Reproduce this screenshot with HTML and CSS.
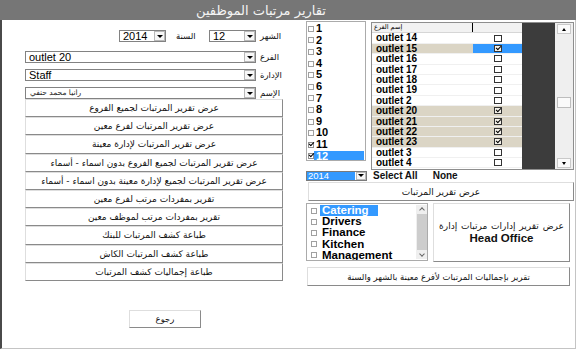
FILE: index.html
```html
<!DOCTYPE html>
<html lang="ar">
<head>
<meta charset="utf-8">
<link rel="stylesheet" href="styles.css">
</head>
<body>
<div class="titlebar"><span class="ar">تقارير مرتبات الموظفين</span></div>
<div class="window">
  <div class="left">
    <div class="frow date">
      <div class="sel sm first"><span class="v">2014</span><span class="dd"></span></div>
      <span class="lbl year ar">السنة</span>
      <div class="sel sm"><span class="v">12</span><span class="dd"></span></div>
      <span class="lbl ar">الشهر</span>
    </div>
    <div class="frow">
      <div class="sel wide"><span class="v">outlet 20</span><span class="dd"></span></div>
      <span class="lbl ar">الفرع</span>
    </div>
    <div class="frow">
      <div class="sel wide"><span class="v">Staff</span><span class="dd"></span></div>
      <span class="lbl ar">الإدارة</span>
    </div>
    <div class="frow">
      <div class="sel wide"><span class="v ar small">رانيا محمد حنفي</span><span class="dd"></span></div>
      <span class="lbl ar">الإسم</span>
    </div>
    <div class="bstack">
      <div class="btn ar">عرض تقرير المرتبات لجميع الفروع</div>
      <div class="btn ar">عرض تقرير المرتبات لفرع معين</div>
      <div class="btn ar">عرض تقرير المرتبات لإدارة معينة</div>
      <div class="btn ar">عرض تقرير المرتبات لجميع الفروع بدون اسماء - أسماء</div>
      <div class="btn ar">عرض تقرير المرتبات لجميع لإدارة معينة بدون اسماء - أسماء</div>
      <div class="btn ar">تقرير بمفردات مرتب لفرع معين</div>
      <div class="btn ar">تقرير بمفردات مرتب لموظف معين</div>
      <div class="btn ar">طباعة كشف المرتبات للبنك</div>
      <div class="btn ar">طباعة كشف المرتبات الكاش</div>
      <div class="btn ar">طباعة إجماليات كشف المرتبات</div>
    </div>
    <div class="btn back ar">رجوع</div>
  </div>

  <div class="right">
    <div class="toprow">
      <div class="months">
        <div class="mi"><span class="cb"></span><span class="t">1</span></div>
        <div class="mi"><span class="cb"></span><span class="t">2</span></div>
        <div class="mi"><span class="cb"></span><span class="t">3</span></div>
        <div class="mi"><span class="cb"></span><span class="t">4</span></div>
        <div class="mi"><span class="cb"></span><span class="t">5</span></div>
        <div class="mi"><span class="cb"></span><span class="t">6</span></div>
        <div class="mi"><span class="cb"></span><span class="t">7</span></div>
        <div class="mi"><span class="cb"></span><span class="t">8</span></div>
        <div class="mi"><span class="cb"></span><span class="t">9</span></div>
        <div class="mi"><span class="cb"></span><span class="t">10</span></div>
        <div class="mi"><span class="cb on"></span><span class="t">11</span></div>
        <div class="mi hl"><span class="cb on"></span><span class="t">12</span></div>
      </div>
      <div class="grid">
        <div class="gmain">
          <div class="gh"><span class="ghn ar">إسم الفرع</span><span class="ghc"></span></div>
          <div class="gr"><span class="gn">outlet 14</span><span class="gc"><i class="box"></i></span></div>
          <div class="gr b"><span class="gn">outlet 15</span><span class="gc cur"><i class="box on"></i></span></div>
          <div class="gr"><span class="gn">outlet 16</span><span class="gc"><i class="box"></i></span></div>
          <div class="gr"><span class="gn">outlet 17</span><span class="gc"><i class="box"></i></span></div>
          <div class="gr"><span class="gn">outlet 18</span><span class="gc"><i class="box"></i></span></div>
          <div class="gr"><span class="gn">outlet 19</span><span class="gc"><i class="box"></i></span></div>
          <div class="gr"><span class="gn">outlet 2</span><span class="gc"><i class="box"></i></span></div>
          <div class="gr b"><span class="gn">outlet 20</span><span class="gc"><i class="box on"></i></span></div>
          <div class="gr b"><span class="gn">outlet 21</span><span class="gc"><i class="box on"></i></span></div>
          <div class="gr b"><span class="gn">outlet 22</span><span class="gc"><i class="box on"></i></span></div>
          <div class="gr b"><span class="gn">outlet 23</span><span class="gc"><i class="box on"></i></span></div>
          <div class="gr"><span class="gn">outlet 3</span><span class="gc"><i class="box"></i></span></div>
          <div class="gr"><span class="gn">outlet 4</span><span class="gc"><i class="box"></i></span></div>
        </div>
        <div class="gdark"></div>
        <div class="gscroll">
          <span class="sbtn up"></span>
          <span class="strack"><span class="sthumb"></span></span>
          <span class="sbtn down"></span>
        </div>
      </div>
    </div>

    <div class="comborow">
      <div class="combo"><span class="cv">2014</span><span class="dd"></span></div>
      <span class="link">Select All</span>
      <span class="link none">None</span>
    </div>

    <div class="btn wide2 ar">عرض تقرير المرتبات</div>

    <div class="deptrow">
      <div class="depts">
        <div class="ditems">
          <div class="di hl"><span class="cb"></span><span class="t">Catering</span></div>
          <div class="di"><span class="cb"></span><span class="t">Drivers</span></div>
          <div class="di"><span class="cb"></span><span class="t">Finance</span></div>
          <div class="di"><span class="cb"></span><span class="t">Kitchen</span></div>
          <div class="di"><span class="cb"></span><span class="t">Management</span></div>
        </div>
        <div class="dscroll">
          <span class="chev up"></span>
          <span class="dthumb"></span>
          <span class="chev down"></span>
        </div>
      </div>
      <div class="btn headoff">
        <span class="ar hsub">عرض تقرير إدارات مرتبات إدارة</span>
        <span class="hmain">Head Office</span>
      </div>
    </div>

    <div class="btn bottom ar">تقرير بإجماليات المرتبات لأفرع معينة بالشهر والسنة</div>
  </div>
</div>
</body>
</html>
```

FILE: styles.css
```css
* { box-sizing: border-box; margin: 0; padding: 0; }
html, body { width: 576px; height: 350px; overflow: hidden; background: #fff; }
body { font-family: "Liberation Sans", "DejaVu Sans", sans-serif; color: #000; }
.ar { font-family: "DejaVu Sans", "Liberation Sans", sans-serif; }

.titlebar {
  height: 20px;
  background: #767676;
  color: #f4f4f4;
  font-size: 13px;
  display: flex;
  align-items: center;
  justify-content: center;
  padding-right: 54px;
}

.window {
  display: flex;
  height: 329px;
  border-left: 2px solid #4a4a4a;
  border-right: 1px solid #c4c4c4;
  border-bottom: 1px solid #c4c4c4;
}

/* ---------- left ---------- */
.left { width: 304px; padding: 10px 0 0 23px; display: flex; flex-direction: column; align-items: flex-start; }
.frow { display: flex; align-items: center; height: 12px; margin-top: 6px; }
.frow.date { margin-top: 0; margin-bottom: 3px; }
.sel {
  height: 12px;
  border: 1px solid #828282;
  background: #fff;
  display: flex;
  align-items: stretch;
  font-size: 11px;
}
.sel .v { flex: 1; padding-left: 3px; line-height: 10px; white-space: nowrap; overflow: hidden; }
.sel .v.small { font-size: 7.5px; padding-left: 4px; color: #222; }
.sel.sm { width: 47px; }
.sel.first { margin-left: 94px; }
.sel.wide { width: 231px; }
.dd {
  width: 11px;
  border: 1px solid #b9b9b9;
  background: #f7f7f7;
  display: flex;
  align-items: center;
  justify-content: center;
}
.dd::before {
  content: "";
  border-left: 3px solid transparent;
  border-right: 3px solid transparent;
  border-top: 3px solid #000;
}
.lbl { font-size: 8.5px; margin-left: 4px; white-space: nowrap; color: #111; }
.lbl.year { width: 43px; margin-left: 0; padding-left: 10px; }

.bstack { width: 258px; display: flex; flex-direction: column; }
.btn {
  background: #fff;
  border: 1px solid;
  border-color: #dedede #8a8a8a #8a8a8a #dedede;
  display: flex;
  align-items: center;
  justify-content: center;
  font-size: 9px;
  color: #111;
  white-space: nowrap;
}
.bstack .btn { height: 18.2px; }
.btn.back { width: 72px; height: 18px; margin-top: 29px; margin-left: 104px; font-size: 8.5px; }

/* ---------- right ---------- */
.right { width: 269px; padding-top: 1px; display: flex; flex-direction: column; align-items: flex-start; }
.toprow { display: flex; align-items: flex-start; }

.months { width: 60px; height: 140px; border: 1px solid #ababab; padding: 1px 0 0 0; overflow: hidden; }
.mi { height: 11.6px; display: flex; align-items: center; font-size: 11px; font-weight: bold; }
.cb { width: 6px; height: 6px; border: 1px solid #a0a0a0; background: #fff; flex: none; position: relative; margin-left: 1px; }
.cb.on { border-color: #909090; }
.cb.on::after {
  content: "";
  position: absolute;
  left: 0px; top: -1px;
  width: 4px; height: 2px;
  border-left: 1.5px solid #000;
  border-bottom: 1.5px solid #000;
  transform: rotate(-45deg);
}
.mi .t { padding-left: 2px; line-height: 11.6px; }
.mi.hl .t { background: #3399ff; color: #fff; flex: 1; margin-right: 1px; }

.grid {
  margin-left: 5px;
  margin-top: 1px;
  width: 203px;
  height: 148px;
  border: 1px solid #8e8e8e;
  display: flex;
}
.gmain { width: 150px; display: flex; flex-direction: column; }
.gh { display: flex; height: 10.4px; background: #f2f2f2; border-bottom: 1px solid #d6d6d6; }
.ghn { width: 101px; border-right: 1px solid #000; font-size: 6.5px; padding-left: 2px; line-height: 9px; }
.ghc { flex: 1; }
.gr { display: flex; height: 10.4px; border-bottom: 1px solid #f0f0f0; }
.gn { width: 101px; font-size: 10px; font-weight: bold; padding-left: 4px; line-height: 9.6px; }
.gc { flex: 1; display: flex; align-items: center; justify-content: center; }
.gr.b { background: #dbd5c5; }
.gc.cur { background: #3399ff; }
.box { width: 8px; height: 7px; border: 1px solid #333; background: #fff; position: relative; }
.gr.b .box { background: #f3f0e8; }
.box.on::after {
  content: "";
  position: absolute;
  left: 1px; top: 0px;
  width: 4px; height: 2px;
  border-left: 1.5px solid #000;
  border-bottom: 1.5px solid #000;
  transform: rotate(-45deg);
}
.gdark { width: 33px; background: #3c3c3c; }
.gscroll { width: 18px; background: #efefef; display: flex; flex-direction: column; align-items: center; }
.sbtn { width: 14px; height: 10px; margin-top: 1px; border: 1px solid #c9c9c9; background: #fbfbfb; display: flex; align-items: center; justify-content: center; }
.sbtn.up::before { content: ""; border-left: 2.5px solid transparent; border-right: 2.5px solid transparent; border-bottom: 3px solid #000; }
.sbtn.down { margin: 0 0 1px 0; }
.sbtn.down::before { content: ""; border-left: 2.5px solid transparent; border-right: 2.5px solid transparent; border-top: 3px solid #000; }
.strack { flex: 1; width: 14px; padding-top: 63px; }
.sthumb { display: block; width: 14px; height: 11px; border: 1px solid #bdbdbd; background: #fafafa; }

.comborow { display: flex; align-items: center; height: 11px; }
.combo { width: 61px; height: 10px; border: 1px solid #7a7a7a; display: flex; background: #fff; }
.cv { flex: 1; background: #3399ff; color: #fff; font-size: 9.5px; line-height: 8px; padding-left: 1px; margin-right: 1px; }
.combo .dd { width: 10px; }
.link { font-size: 10px; font-weight: bold; margin-left: 6px; color: #111; }
.link.none { margin-left: 15px; }

.btn.wide2 { width: 266px; height: 19px; margin: 1px 0 0 2px; }

.deptrow { display: flex; margin-top: 2px; }
.depts { width: 122px; height: 58px; border: 1px solid #ababab; display: flex; }
.ditems { flex: 1; padding: 1px 0 0 3px; overflow: hidden; }
.di { height: 11.2px; display: flex; align-items: center; font-size: 11.5px; font-weight: bold; }
.di .t { margin-left: 3px; padding: 0 9px 0 2px; line-height: 11.2px; }
.di.hl .t { background: #3399ff; color: #fff; }
.dscroll { width: 11px; margin: 1px 0; background: #efefef; display: flex; flex-direction: column; align-items: center; }
.chev { width: 4px; height: 4px; border-left: 1px solid #666; border-top: 1px solid #666; margin: 3px 0 1px; transform: rotate(45deg); flex: none; }
.chev.down { transform: rotate(225deg); margin: 1px 0 3px; }
.dthumb { width: 10px; flex: 1; background: #cdcdcd; margin: 1px 0; }

.btn.headoff { width: 137px; height: 59px; margin-left: 5px; flex-direction: column; }
.hsub { font-size: 9px; word-spacing: 1px; }
.hmain { font-size: 11.5px; font-weight: bold; margin-top: 1px; }

.btn.bottom { width: 263px; height: 19px; margin: 5px 0 0 1px; font-size: 8.5px; }
```
